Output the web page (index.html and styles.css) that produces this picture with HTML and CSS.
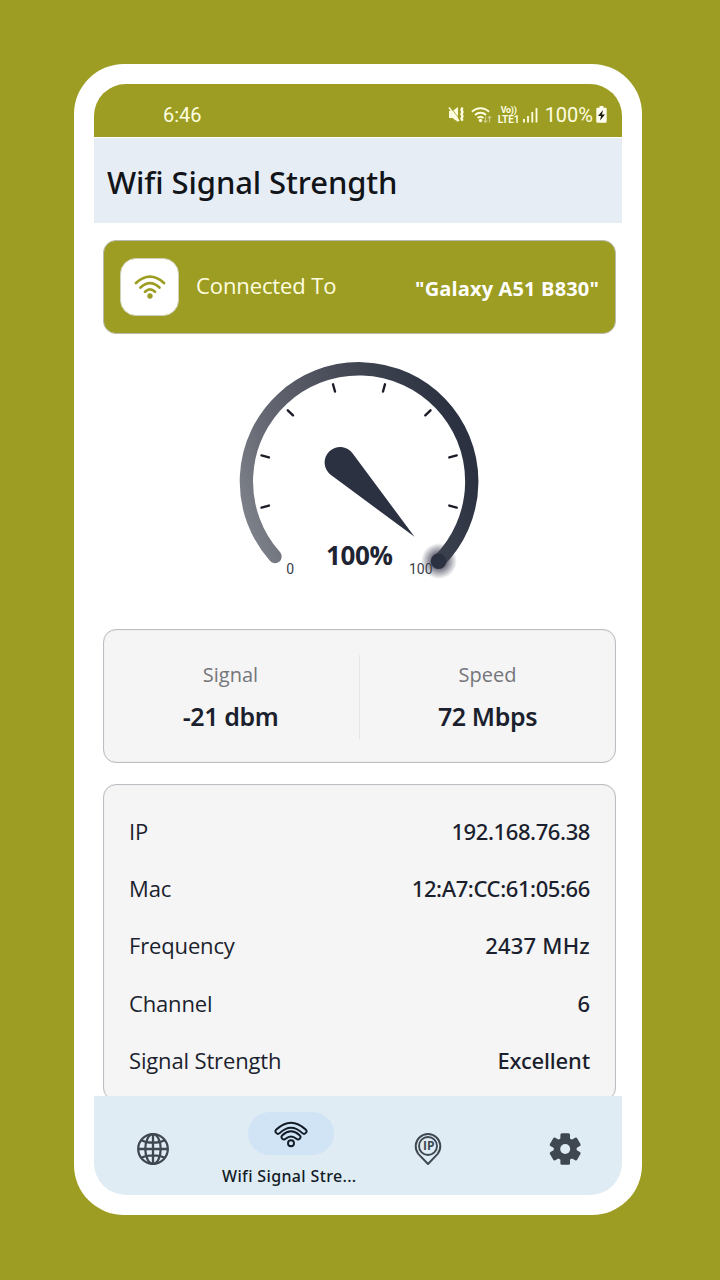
FILE: index.html
```html
<!DOCTYPE html>
<html lang="en">
<head>
    <meta charset="UTF-8">
    <meta name="viewport" content="width=device-width, initial-scale=1.0">
    <title>Wifi Signal Strength</title>
    <link rel="stylesheet" href="styles.css">
</head>
<body>
    <div class="phone">
        <div class="screen">
            <div class="status-bar">
                <span class="time">6:46</span>
                <div class="status-icons">
                    <!-- muted + vibrate -->
                    <svg class="icon-mute" width="17" height="17" viewBox="0 0 17 17">
                        <path fill="#fffee0" d="M1 5h3.500L10 1v15L4.500 12H1z"/>
                        <path stroke="#9d9d23" stroke-width="0.800" d="M2.700 1.500l8 10.500"/>
                        <path stroke="#fffee0" stroke-width="1.500" fill="none" d="M1 1.500l10 13.500"/>
                        <path stroke="#fffee0" stroke-width="2.400" fill="none" d="M14.500 1.500l-1 2.200 1 2.200-1 2.200 1 2.200-1 2.200 1 2.200"/>
                    </svg>
                    <!-- wifi with traffic arrows -->
                    <svg class="icon-wifi-small" width="22" height="18" viewBox="0 0 22 18">
                        <g fill="none" stroke="#fffee0" stroke-width="2">
                            <path d="M1 5.800a12 12 0 0 1 17 0"/>
                            <path d="M4 9a8 8 0 0 1 11 0"/>
                            <path d="M6.600 12a4.300 4.300 0 0 1 5.800 0"/>
                        </g>
                        <circle cx="9.500" cy="14.500" r="1.700" fill="#fffee0"/>
                        <path stroke="#cbca86" stroke-width="1.200" fill="none" d="M14.500 10.500v6M12.800 14.700l1.700 1.800 1.700-1.800M18.500 16.500v-6M16.800 12.200l1.700-1.800 1.700 1.800"/>
                    </svg>
                    <div class="volte">
                        <span class="vo">Vo))</span>
                        <span>LTE1</span>
                    </div>
                    <svg class="icon-bars" width="15" height="16" viewBox="0 0 15 16">
                        <path stroke="#fffee0" stroke-width="1.800" d="M1 12v3.500M5 9v6.500M9.300 5v10.500M13.500 1v14.500"/>
                    </svg>
                    <span class="battery-text">100%</span>
                    <svg class="icon-battery" width="11" height="17" viewBox="0 0 11 17">
                        <path fill="#fffef0" d="M3.500 0h4v1.800H9.500a1.200 1.200 0 0 1 1.200 1.200v12.500a1.200 1.200 0 0 1-1.200 1.200h-8a1.200 1.200 0 0 1-1.200-1.200V3a1.200 1.200 0 0 1 1.200-1.200h2z"/>
                        <path fill="#1c1c10" d="M7 4L2 10h3L4 14.500 9 8.500H6z"/>
                    </svg>
                </div>
            </div>

            <h1 class="app-title"><span>Wifi Signal Strength</span></h1>

            <div class="content">
                <div class="network">
                    <div class="network-icon">
                        <svg width="32" height="24" viewBox="0 0 32 24">
                            <g fill="none" stroke="#9d9d23" stroke-width="2.700" stroke-linecap="round">
                                <path d="M2 8Q16 -4.600 30 8"/>
                                <path d="M6.500 12.500Q16 3.900 25.500 12.500"/>
                                <path d="M11 16.800Q16 12 21 16.800"/>
                            </g>
                            <circle cx="16" cy="21" r="2.700" fill="#9d9d23"/>
                        </svg>
                    </div>
                    <span class="network-label">Connected To</span>
                    <span class="network-name">"Galaxy A51 B830"</span>
                </div>

                <svg class="gauge" width="260" height="240" viewBox="230 350 260 240">
                    <defs>
                        <linearGradient id="arc" gradientUnits="userSpaceOnUse" x1="250" y1="570" x2="480" y2="490">
                            <stop offset="0" stop-color="#82868d"/>
                            <stop offset="0.250" stop-color="#666973"/>
                            <stop offset="0.600" stop-color="#484c58"/>
                            <stop offset="1" stop-color="#2b3140"/>
                        </linearGradient>
                        <radialGradient id="glow">
                            <stop offset="0.400" stop-color="#2b2d40" stop-opacity="0.700"/>
                            <stop offset="1" stop-color="#2b2d40" stop-opacity="0"/>
                        </radialGradient>
                    </defs>
                    <circle cx="439" cy="561" r="18" fill="url(#glow)"/>
                    <path d="M275 556.500A112.700 112.700 0 1 1 438.700 561.200" fill="none" stroke="url(#arc)" stroke-width="13.300" stroke-linecap="round"/>
                    <circle cx="438.500" cy="561.300" r="7.800" fill="#2b3140"/>
                    <g stroke="#1c1c28" stroke-width="2.400" stroke-linecap="round">
                        <path d="M261.500 507.600l7.400-2"/>
                        <path d="M261.500 455.400l7.400 2"/>
                        <path d="M287.800 410.300l5.200 5"/>
                        <path d="M333 384.300l2 7.200"/>
                        <path d="M385 384.300l-2 7.200"/>
                        <path d="M430.500 410.300l-5.200 5"/>
                        <path d="M456.700 455.400l-7.400 2"/>
                        <path d="M456.700 507.600l-7.400-2"/>
                    </g>
                    <path fill="#2b3140" d="M414.500 536.800L331 475A15.500 15.500 0 1 1 352.700 453.400z"/>
                    <text class="gauge-value" x="326" y="564.700" textLength="67">100%</text>
                    <text class="gauge-tick" x="286.300" y="573.500">0</text>
                    <text class="gauge-tick" x="409" y="573.500" textLength="23.500">100</text>
                </svg>

                <div class="card stats">
                    <div class="stat">
                        <span class="stat-label">Signal</span>
                        <span class="stat-value">-21 dbm</span>
                    </div>
                    <div class="divider"></div>
                    <div class="stat">
                        <span class="stat-label">Speed</span>
                        <span class="stat-value">72 Mbps</span>
                    </div>
                </div>

                <div class="card details">
                    <div class="row"><span>IP</span><span class="value address">192.168.76.38</span></div>
                    <div class="row"><span>Mac</span><span class="value address">12:A7:CC:61:05:66</span></div>
                    <div class="row"><span>Frequency</span><span class="value frequency">2437 MHz</span></div>
                    <div class="row"><span>Channel</span><span class="value">6</span></div>
                    <div class="row"><span>Signal Strength</span><span class="value">Excellent</span></div>
                </div>
            </div>

            <div class="nav">
                <div class="nav-item">
                    <svg width="34" height="34" viewBox="0 0 34 34" fill="none" stroke="#3f4851" stroke-width="2.300">
                        <circle cx="17" cy="17" r="14.800"/>
                        <ellipse cx="17" cy="17" rx="7.700" ry="14.800"/>
                        <path d="M17 2v30M2 17h30M5.500 8.200C11 11.400 23 11.400 28.500 8.200M5.500 25.800C11 22.600 23 22.600 28.500 25.800"/>
                    </svg>
                </div>
                <div class="nav-item active">
                    <div class="pill">
                        <!-- each band is a dark stroke with a lighter one on top -->
                        <svg width="34" height="30" viewBox="0 0 34 30" fill="none" stroke-linecap="round">
                            <path class="band-outer" d="M4 12.300Q17 0.200 30 12.300"/>
                            <path class="band-inner" d="M4 12.300Q17 0.200 30 12.300"/>
                            <path class="band-outer" d="M10 18Q17 11.700 24 18"/>
                            <path class="band-inner" d="M10 18Q17 11.700 24 18"/>
                            <circle cx="17" cy="24.200" r="3" stroke="#121b26" stroke-width="1.900"/>
                        </svg>
                    </div>
                    <span class="nav-label">Wifi Signal Stre...</span>
                </div>
                <div class="nav-item">
                    <svg width="28" height="34" viewBox="0 0 28 34" fill="none" stroke="#3f4851" stroke-width="1.900">
                        <path d="M14 32L4.300 21.800A12.300 12.300 0 1 1 23.700 21.800z" stroke-linejoin="round"/>
                        <circle cx="14" cy="14" r="9"/>
                        <text class="pin-text" x="9" y="18.300">IP</text>
                    </svg>
                </div>
                <div class="nav-item">
                    <svg width="34" height="34" viewBox="-16.200 -17 34 34">
                        <g fill="#3f4851">
                            <circle r="11.500"/>
                            <rect x="-4.800" y="-15.700" width="9.600" height="31.400" rx="1.500"/>
                            <rect x="-4.800" y="-15.700" width="9.600" height="31.400" rx="1.500" transform="rotate(60)"/>
                            <rect x="-4.800" y="-15.700" width="9.600" height="31.400" rx="1.500" transform="rotate(120)"/>
                        </g>
                        <circle r="5" fill="#dfecf4"/>
                    </svg>
                </div>
            </div>
        </div>
    </div>
</body>
</html>
```
FILE: styles.css
```css
* {
    box-sizing: border-box;
}
body {
    margin: 0;
    padding: 64px 0 0 74px;
    height: 1280px;
    overflow: hidden;
    background-color: #9d9d23;
    font-family: 'Open Sans', 'Noto Sans', sans-serif;
    color: #1b1f2e;
}
svg {
    display: block;
}
.phone {
    width: 568px;
    height: 1151px;
    padding: 20px;
    background-color: #fff;
    border-radius: 50px;
}
.screen {
    display: flex;
    flex-direction: column;
    width: 528px;
    height: 1111px;
    overflow: hidden;
    border-radius: 32px;
}
.status-bar {
    display: flex;
    flex: none;
    justify-content: space-between;
    align-items: center;
    height: 53px;
    padding: 8px 15px 0 69px;
    background-color: #9d9d23;
    color: #fffee0;
    font-family: Roboto, sans-serif;
    font-size: 20px;
}
.status-icons {
    display: flex;
    align-items: center;
}
.icon-wifi-small {
    margin-left: 6px;
}
.volte {
    display: flex;
    flex-direction: column;
    align-items: center;
    width: 22px;
    margin-left: 5px;
    font-size: 10px;
    line-height: 9px;
    font-weight: 700;
}
.vo {
    font-size: 9px;
    letter-spacing: -0.3px;
}
.icon-bars {
    margin-left: 3px;
}
.battery-text {
    margin-left: 7px;
}
.icon-battery {
    margin-left: 3px;
}
.app-title {
    flex: none;
    margin: 1px 0 0;
    padding-left: 13px;
    height: 85px;
    line-height: 89px;
    background-color: #e7edf5;
    color: #111418;
    font-family: 'Noto Sans', sans-serif;
    font-size: 31px;
    font-weight: 500;
    letter-spacing: -0.1px;
}
.content {
    flex: 1;
    min-height: 0;
    overflow: hidden;
    padding: 17px 6px 0 9px;
}
.network {
    display: flex;
    align-items: center;
    height: 94px;
    padding: 0 16px 0 16px;
    background-color: #9d9d23;
    border: 1.5px solid #b9bbb0;
    border-radius: 13px;
}
.network-icon {
    display: flex;
    align-items: center;
    justify-content: center;
    width: 59px;
    height: 58px;
    background-color: #fff;
    border: 1px solid #cfd0b8;
    border-radius: 16px;
}
.network-label {
    margin: 0 auto 5px 17px;
    color: #fffde0;
    font-size: 22px;
    letter-spacing: -0.1px;
}
.network-name {
    margin-top: 3px;
    color: #fff;
    font-size: 20px;
    font-weight: 700;
    letter-spacing: 0.15px;
}
.gauge {
    margin: 16px 0 39px 127px;
}
.gauge-value {
    font-size: 26px;
    font-weight: 700;
    fill: #1f2433;
}
.gauge-tick {
    font-family: Roboto, sans-serif;
    font-size: 14px;
    fill: #3a3e4a;
}
.card {
    background-color: #f5f5f5;
    border: 1.5px solid #bdbec3;
    border-radius: 13px;
    box-shadow: inset 0 0 1px #bdbec3;
}
.stats {
    display: grid;
    grid-template-columns: 1fr 1px 1fr;
    align-items: center;
    height: 134px;
    padding-top: 2px;
}
.stat {
    display: flex;
    flex-direction: column;
    align-items: center;
}
.stat:first-child {
    padding-right: 2px;
}
.stat-label {
    color: #75767a;
    font-size: 20px;
    line-height: 28px;
}
.stat-value {
    margin-top: 9px;
    font-family: 'Noto Sans', sans-serif;
    font-size: 25px;
    font-weight: 600;
    letter-spacing: -0.4px;
    line-height: 36px;
}
.divider {
    height: 84px;
    background-color: #e4e5e9;
}
.details {
    height: 317px;
    margin-top: 21px;
    padding: 18px 25px;
}
.row {
    display: flex;
    justify-content: space-between;
    font-size: 22px;
    letter-spacing: -0.15px;
    line-height: 57.2px;
}
.value {
    font-family: 'Noto Sans', sans-serif;
    font-weight: 500;
}
.address {
    letter-spacing: -0.4px;
}
.frequency {
    letter-spacing: 0.2px;
}
.nav {
    display: grid;
    grid-template-columns: repeat(4, 137.4px);
    flex: none;
    justify-content: center;
    height: 99px;
    background-color: #dfecf4;
}
.nav-item {
    display: flex;
    flex-direction: column;
    align-items: center;
    justify-content: center;
    padding: 7px 0 0 3px;
}
.active {
    justify-content: flex-start;
    padding-top: 16px;
}
.pill {
    display: flex;
    align-items: center;
    justify-content: center;
    width: 86px;
    height: 43px;
    background-color: #d0e4f5;
    border-radius: 22px;
}
.band-outer {
    stroke: #121b26;
    stroke-width: 6.8px;
}
.band-inner {
    stroke: #d0e4f5;
    stroke-width: 3px;
}
.nav-label {
    margin: 9px 3px 0 0;
    color: #121b26;
    font-family: 'Noto Sans', sans-serif;
    font-size: 16px;
    font-weight: 500;
    letter-spacing: 0.35px;
    line-height: 24px;
    white-space: nowrap;
}
.pin-text {
    font-size: 12px;
    font-weight: 700;
    fill: #3f4851;
    stroke: none;
}
```
